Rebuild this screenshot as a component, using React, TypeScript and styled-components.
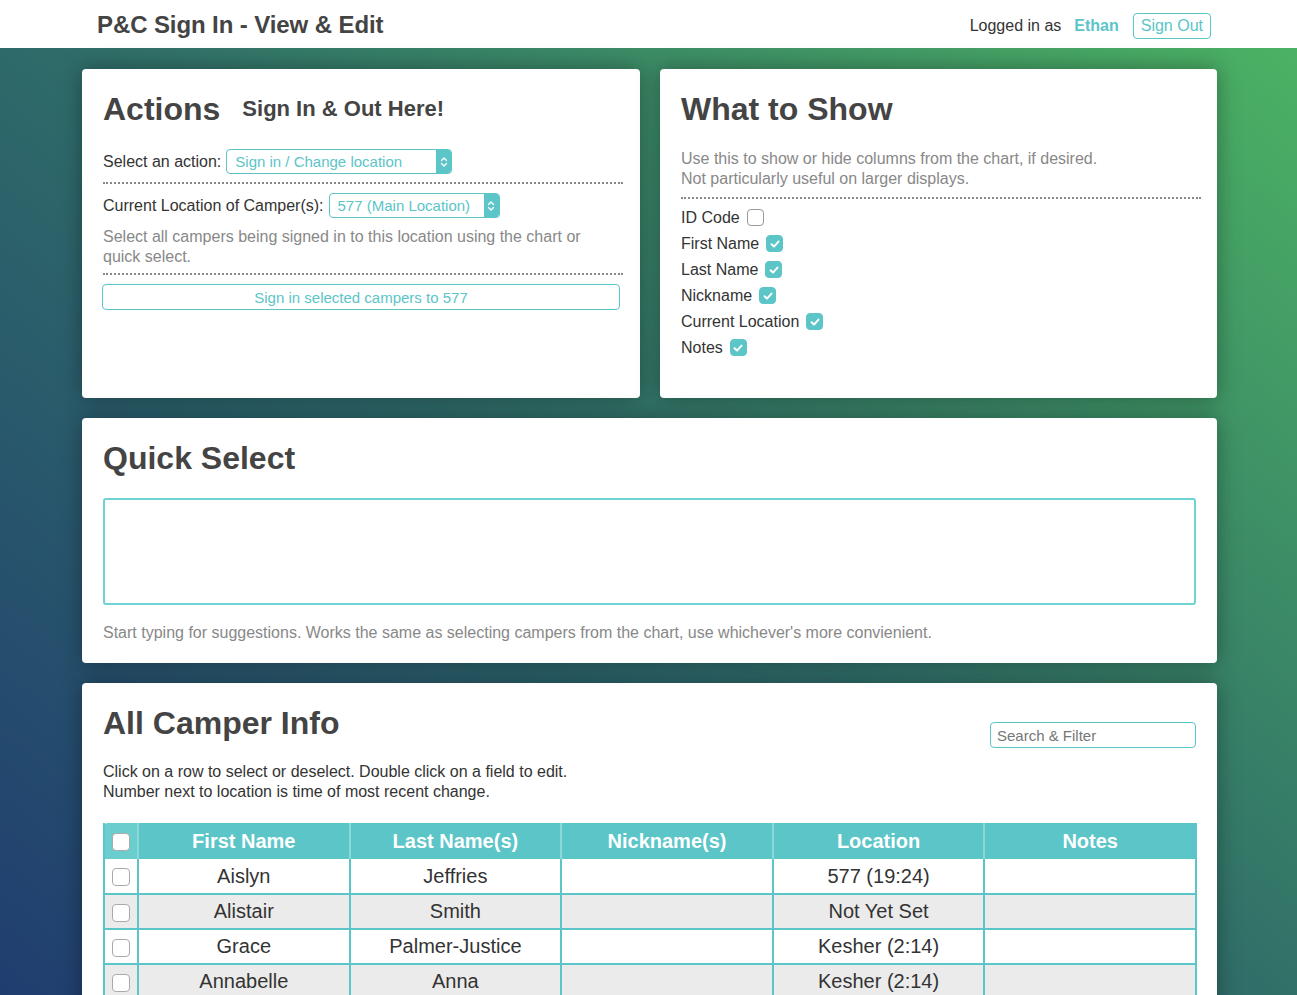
import React from 'react'
import styled, { createGlobalStyle } from 'styled-components';

const teal = '#5bc5c8';

const GlobalStyle = createGlobalStyle`
  html, body {
    margin: 0;
    padding: 0;
    height: 100%;
    overflow: hidden;
  }
  body {
    font-family: "Liberation Sans", Arial, sans-serif;
    color: #333;
    background: #2f6e69;
  }
  * {
    box-sizing: border-box;
  }
`;

type Camper = {
    first: string;
    last: string;
    nickname: string;
    location: string;
    notes: string;
}

const campers: Camper[] = [
    { first: 'Aislyn', last: 'Jeffries', nickname: '', location: '577 (19:24)', notes: '' },
    { first: 'Alistair', last: 'Smith', nickname: '', location: 'Not Yet Set', notes: '' },
    { first: 'Grace', last: 'Palmer-Justice', nickname: '', location: 'Kesher (2:14)', notes: '' },
    { first: 'Annabelle', last: 'Anna', nickname: '', location: 'Kesher (2:14)', notes: '' },
];

const columnOptions = [
    { label: 'ID Code', checked: false },
    { label: 'First Name', checked: true },
    { label: 'Last Name', checked: true },
    { label: 'Nickname', checked: true },
    { label: 'Current Location', checked: true },
    { label: 'Notes', checked: true },
];

const SelectArrows = () => (
    <svg width="8" height="12" viewBox="0 0 8 12" fill="none" stroke="#fff" strokeWidth="1.4" strokeLinecap="round" strokeLinejoin="round">
        <path d="M1.5 4.5 L4 2 L6.5 4.5" />
        <path d="M1.5 7.5 L4 10 L6.5 7.5" />
    </svg>
)

const CheckMark = () => (
    <svg width="12" height="12" viewBox="0 0 12 12" fill="none" stroke="#fff" strokeWidth="2" strokeLinecap="round" strokeLinejoin="round">
        <path d="M2.5 6.3 L5 8.6 L9.5 3.6" />
    </svg>
)

const App: React.FC = () => {
    return (
        <>
            <GlobalStyle />
            <Page>
                <TopBar>
                    <AppTitle>P&amp;C Sign In - View &amp; Edit</AppTitle>
                    <UserArea>
                        <span>Logged in as</span>
                        <UserName>Ethan</UserName>
                        <OutlineButton>Sign Out</OutlineButton>
                    </UserArea>
                </TopBar>
                <Main>
                    <TopGrid>
                        <Card>
                            <CardHeading>
                                <Title>Actions</Title>
                                <Subtitle>Sign In &amp; Out Here!</Subtitle>
                            </CardHeading>
                            <FieldRow>
                                <span>Select an action:</span>
                                <FakeSelect width={226}>
                                    <SelectValue>Sign in / Change location</SelectValue>
                                    <SelectHandle><SelectArrows /></SelectHandle>
                                </FakeSelect>
                            </FieldRow>
                            <Divider />
                            <FieldRow>
                                <span>Current Location of Camper(s):</span>
                                <FakeSelect width={171}>
                                    <SelectValue>577 (Main Location)</SelectValue>
                                    <SelectHandle><SelectArrows /></SelectHandle>
                                </FakeSelect>
                            </FieldRow>
                            <ActionHint>Select all campers being signed in to this location using the chart or quick select.</ActionHint>
                            <Divider />
                            <WideButton>Sign in selected campers to 577</WideButton>
                        </Card>
                        <Card>
                            <CardHeading>
                                <Title>What to Show</Title>
                            </CardHeading>
                            <HelpText>
                                Use this to show or hide columns from the chart, if desired.<br />
                                Not particularly useful on larger displays.
                            </HelpText>
                            <Divider />
                            <OptionList>
                                {columnOptions.map((opt) => (
                                    <OptionRow key={opt.label}>
                                        <span>{opt.label}</span>
                                        <Box checked={opt.checked}>{opt.checked && <CheckMark />}</Box>
                                    </OptionRow>
                                ))}
                            </OptionList>
                        </Card>
                    </TopGrid>
                    <Card>
                        <CardHeading>
                            <Title>Quick Select</Title>
                        </CardHeading>
                        <QuickInput />
                        <HelpText>Start typing for suggestions. Works the same as selecting campers from the chart, use whichever's more convienient.</HelpText>
                    </Card>
                    <Card>
                        <InfoHeader>
                            <Title>All Camper Info</Title>
                            <SearchInput placeholder="Search & Filter" />
                        </InfoHeader>
                        <PlainText>
                            Click on a row to select or deselect. Double click on a field to edit.<br />
                            Number next to location is time of most recent change.
                        </PlainText>
                        <Table>
                            <colgroup>
                                <col style={{ width: 34 }} />
                                <col />
                                <col />
                                <col />
                                <col />
                                <col />
                            </colgroup>
                            <thead>
                                <tr>
                                    <HeadCell first><RowBox /></HeadCell>
                                    <HeadCell>First Name</HeadCell>
                                    <HeadCell>Last Name(s)</HeadCell>
                                    <HeadCell>Nickname(s)</HeadCell>
                                    <HeadCell>Location</HeadCell>
                                    <HeadCell>Notes</HeadCell>
                                </tr>
                            </thead>
                            <tbody>
                                {campers.map((c, i) => (
                                    <BodyRow key={c.first} striped={i % 2 === 1}>
                                        <Cell><RowBox /></Cell>
                                        <Cell>{c.first}</Cell>
                                        <Cell>{c.last}</Cell>
                                        <Cell>{c.nickname}</Cell>
                                        <Cell>{c.location}</Cell>
                                        <Cell>{c.notes}</Cell>
                                    </BodyRow>
                                ))}
                            </tbody>
                        </Table>
                    </Card>
                </Main>
            </Page>
        </>
    )
}

export default App;


const Page = styled.div`
  min-height: 100vh;
  background: linear-gradient(to top right, #1f3a70 0%, #2f6c69 50%, #4db563 100%);
`;

const TopBar = styled.header`
  height: 48px;
  background: #fff;
  display: flex;
  align-items: center;
  justify-content: space-between;
  padding: 0 86px 0 97px;
`;

const AppTitle = styled.h1`
  margin: 0;
  font-size: 24px;
  font-weight: bold;
  color: #444;
  letter-spacing: -0.1px;
  position: relative;
  top: 1px;
`;

const UserArea = styled.div`
  display: flex;
  align-items: center;
  font-size: 16px;
  color: #333;
  padding-top: 3px;
`;

const UserName = styled.span`
  color: ${teal};
  font-weight: bold;
  margin: 0 14px 0 13px;
`;

const OutlineButton = styled.button`
  font-family: inherit;
  font-size: 16px;
  color: ${teal};
  background: #fff;
  border: 1px solid ${teal};
  border-radius: 4px;
  height: 26px;
  padding: 0 7px;
  cursor: pointer;
`;

const Main = styled.main`
  width: 1135px;
  margin: 0 auto;
  padding: 21px 0 40px;
  display: flex;
  flex-direction: column;
  gap: 20px;
  position: relative;
  left: 1px;
`;

const TopGrid = styled.div`
  display: grid;
  grid-template-columns: 558px 557px;
  grid-auto-rows: minmax(329px, auto);
  gap: 20px;
`;

const Card = styled.section`
  background: #fff;
  border-radius: 4px;
  box-shadow: 0 0 22px rgba(0, 0, 0, 0.35);
  padding: 21px 21px 20px;
`;

const CardHeading = styled.div`
  display: flex;
  align-items: center;
  gap: 22px;
  margin-bottom: 21px;
`;

const Title = styled.h2`
  margin: 0;
  font-size: 32px;
  line-height: 38px;
  font-weight: bold;
  color: #444;
`;

const Subtitle = styled.h3`
  margin: 0;
  font-size: 22px;
  font-weight: bold;
  color: #444;
`;

const FieldRow = styled.div`
  display: flex;
  align-items: center;
  gap: 5px;
  font-size: 16px;
  color: #333;
`;

const FakeSelect = styled.div<{ width: number }>`
  width: ${(p) => p.width}px;
  height: 25px;
  border: 1px solid ${teal};
  border-radius: 4px;
  display: flex;
  align-items: stretch;
  overflow: hidden;
`;

const SelectValue = styled.span`
  flex: 1;
  color: ${teal};
  font-size: 15px;
  line-height: 23px;
  padding-left: 8px;
  white-space: nowrap;
`;

const SelectHandle = styled.span`
  width: 15px;
  background: ${teal};
  display: flex;
  align-items: center;
  justify-content: center;
`;

const Divider = styled.hr`
  border: none;
  border-top: 2px dotted #888;
  margin: 8px 0 9px;
  width: 520px;
`;

const HelpText = styled.p`
  margin: 7px 0 0;
  font-size: 16px;
  line-height: 20px;
  color: #888;
`;

const ActionHint = styled(HelpText)`
  margin-top: 9px;
  margin-bottom: -2px;
`;

const WideButton = styled.button`
  display: block;
  width: 518px;
  height: 26px;
  margin-left: -1px;
  font-family: inherit;
  font-size: 15px;
  color: ${teal};
  background: #fff;
  border: 1px solid ${teal};
  border-radius: 4px;
`;

const OptionList = styled.div`
  display: flex;
  flex-direction: column;
  gap: 7px;
  margin-top: 3px;
`;

const OptionRow = styled.label`
  display: flex;
  align-items: center;
  gap: 7px;
  font-size: 16px;
  line-height: 19px;
  color: #333;
`;

const Box = styled.span<{ checked: boolean }>`
  width: 17px;
  height: 17px;
  border-radius: 4px;
  border: 1px solid ${(p) => (p.checked ? teal : '#999')};
  background: ${(p) => (p.checked ? teal : '#fff')};
  display: inline-flex;
  align-items: center;
  justify-content: center;
`;

const QuickInput = styled.div`
  height: 107px;
  border: 2px solid #70d3d3;
  border-radius: 3px;
  margin-top: 6px;
  margin-bottom: 18px;
`;

const InfoHeader = styled.div`
  display: flex;
  justify-content: space-between;
  align-items: flex-start;
  margin-bottom: 14px;
`;

const SearchInput = styled.input`
  width: 206px;
  height: 26px;
  margin-top: 18px;
  border: 1px solid ${teal};
  border-radius: 4px;
  padding: 0 6px;
  font-family: inherit;
  font-size: 15px;
  color: #333;
  &::placeholder {
    color: #777;
  }
`;

const PlainText = styled.p`
  margin: 0 0 21px;
  font-size: 16px;
  line-height: 20px;
  color: #333;
`;

const Table = styled.table`
  width: 1094px;
  border-collapse: collapse;
  table-layout: fixed;
  font-size: 20px;
`;

const HeadCell = styled.th<{ first?: boolean }>`
  height: 36px;
  background: ${(p) => (p.first ? '#6acece' : teal)};
  color: #fff;
  font-weight: bold;
  text-align: center;
  padding: 0;
  border-left: 2px solid #8ad8da;
  &:first-child {
    border-left: 2px solid ${teal};
    border-top-left-radius: 4px;
  }
  &:last-child {
    border-right: 2px solid ${teal};
  }
`;

const BodyRow = styled.tr<{ striped: boolean }>`
  background: ${(p) => (p.striped ? '#ebebeb' : '#fff')};
`;

const Cell = styled.td`
  height: 35px;
  padding: 0;
  text-align: center;
  color: #333;
  border: 2px solid ${teal};
  border-top: none;
  &:first-child {
    text-align: left;
    padding-left: 7px;
  }
`;

const RowBox = styled.span`
  display: inline-block;
  width: 18px;
  height: 18px;
  border: 1px solid #aaa;
  border-radius: 4px;
  background: #fff;
  vertical-align: middle;
`;
